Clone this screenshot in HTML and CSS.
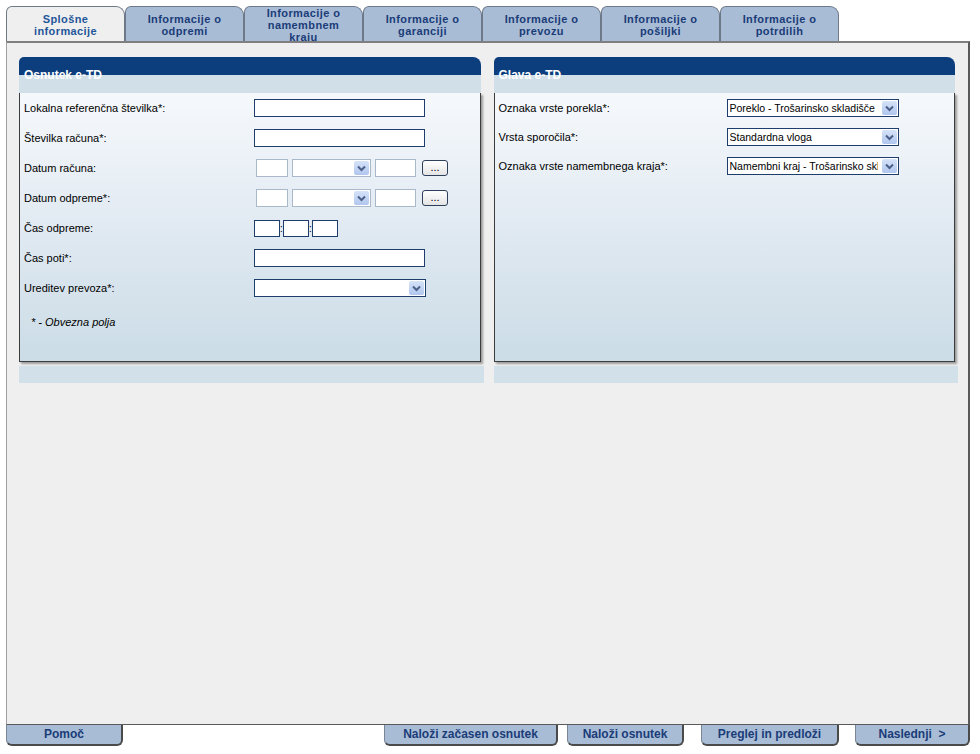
FILE: index.html
```html
<!DOCTYPE html>
<html lang="sl">
  <head>
    <meta charset="UTF-8" />
    <title>e-TD osnutek</title>
    <link rel="stylesheet" href="styles.css">
  </head>
  <body>
    <div class="page">
      <ul class="tabs">
        <li class="tab active">Splošne<br>informacije</li>
        <li class="tab">Informacije o<br>odpremi</li>
        <li class="tab">Informacije o<br>namembnem<br>kraju</li>
        <li class="tab">Informacije o<br>garanciji</li>
        <li class="tab">Informacije o<br>prevozu</li>
        <li class="tab">Informacije o<br>pošiljki</li>
        <li class="tab">Informacije o<br>potrdilih</li>
      </ul>

      <div class="frame">
        <!-- left: osnutek -->
        <div class="column">
          <div class="panel">
            <div class="panel-title">Osnutek e-TD</div>
            <div class="panel-body">
              <div class="row">
                <label>Lokalna referenčna številka*:</label>
                <input class="text" type="text">
              </div>
              <div class="row">
                <label>Številka računa*:</label>
                <input class="text" type="text">
              </div>
              <div class="row">
                <label>Datum računa:</label>
                <div class="fields">
                  <input class="text light day" type="text">
                  <div class="select light month">
                    <select><option></option></select>
                    <span class="arrow"><svg width="15" height="14" viewBox="0 0 15 14"><path d="M4 5.5l3.5 3.5L11 5.5" fill="none" stroke="#4b5f88" stroke-width="2"/></svg></span>
                  </div>
                  <input class="text light year" type="text">
                  <button class="dots" type="button">...</button>
                </div>
              </div>
              <div class="row">
                <label>Datum odpreme*:</label>
                <div class="fields">
                  <input class="text light day" type="text">
                  <div class="select light month">
                    <select><option></option></select>
                    <span class="arrow"><svg width="15" height="14" viewBox="0 0 15 14"><path d="M4 5.5l3.5 3.5L11 5.5" fill="none" stroke="#4b5f88" stroke-width="2"/></svg></span>
                  </div>
                  <input class="text light year" type="text">
                  <button class="dots" type="button">...</button>
                </div>
              </div>
              <div class="row">
                <label>Čas odpreme:</label>
                <div class="time">
                  <input class="text" type="text"><span>:</span><input class="text" type="text"><span>:</span><input class="text" type="text">
                </div>
              </div>
              <div class="row">
                <label>Čas poti*:</label>
                <input class="text" type="text">
              </div>
              <div class="row">
                <label>Ureditev prevoza*:</label>
                <div class="select">
                  <select><option></option></select>
                  <span class="arrow"><svg width="15" height="14" viewBox="0 0 15 14"><path d="M4 5.5l3.5 3.5L11 5.5" fill="none" stroke="#4b5f88" stroke-width="2"/></svg></span>
                </div>
              </div>
              <div class="note">* - Obvezna polja</div>
            </div>
          </div>
          <div class="band"></div>
        </div>

        <!-- right: glava -->
        <div class="column">
          <div class="panel panel-right">
            <div class="panel-title">Glava e-TD</div>
            <div class="panel-body">
              <div class="row">
                <label>Oznaka vrste porekla*:</label>
                <div class="select">
                  <select><option>Poreklo - Trošarinsko skladišče</option></select>
                  <span class="arrow"><svg width="15" height="14" viewBox="0 0 15 14"><path d="M4 5.5l3.5 3.5L11 5.5" fill="none" stroke="#4b5f88" stroke-width="2"/></svg></span>
                </div>
              </div>
              <div class="row">
                <label>Vrsta sporočila*:</label>
                <div class="select">
                  <select><option>Standardna vloga</option></select>
                  <span class="arrow"><svg width="15" height="14" viewBox="0 0 15 14"><path d="M4 5.5l3.5 3.5L11 5.5" fill="none" stroke="#4b5f88" stroke-width="2"/></svg></span>
                </div>
              </div>
              <div class="row">
                <label>Oznaka vrste namembnega kraja*:</label>
                <div class="select">
                  <select><option>Namembni kraj - Trošarinsko skladišče</option></select>
                  <span class="arrow"><svg width="15" height="14" viewBox="0 0 15 14"><path d="M4 5.5l3.5 3.5L11 5.5" fill="none" stroke="#4b5f88" stroke-width="2"/></svg></span>
                </div>
              </div>
            </div>
          </div>
          <div class="band"></div>
        </div>
      </div>

      <div class="footer">
        <button class="fbtn help" type="button">Pomoč</button>
        <button class="fbtn draft" type="button">Naloži začasen osnutek</button>
        <button class="fbtn load" type="button">Naloži osnutek</button>
        <button class="fbtn review" type="button">Preglej in predloži</button>
        <button class="fbtn next" type="button">Naslednji &nbsp;&gt;</button>
      </div>
    </div>
  </body>
</html>
```

FILE: styles.css
```css
body {
  margin: 6px;
  background: #fff;
  font-family: "Liberation Sans", Arial, sans-serif;
  font-size: 11px;
  color: #000;
}
.page {
  width: 964px;
}

/* tabs */
.tabs {
  list-style: none;
  margin: 0;
  padding: 0;
  display: flex;
  height: 35px;
}
.tab {
  width: 119px;
  height: 35px;
  box-sizing: border-box;
  padding-top: 2px;
  display: flex;
  align-items: center;
  justify-content: center;
  text-align: center;
  background: #a9bcd6;
  border: 1px solid #6d7888;
  border-bottom: 0;
  border-radius: 6px 9px 0 0;
  color: #1a3d78;
  font-weight: bold;
  font-size: 11px;
  letter-spacing: 0.4px;
  line-height: 12px;
}
.tab.active {
  background: #efefef;
  color: #1f5699;
}

/* main frame */
.frame {
  position: relative;
  height: 684px;
  box-sizing: border-box;
  background: #efefef;
  border-top: 2px solid #7f7f7f;
  border-left: 1px solid #a0a0a0;
  border-right: 2px solid #5a5a5a;
  border-bottom: 1px solid #5a5a5a;
  padding: 14px 10px 0 12px;
  display: grid;
  grid-template-columns: 1fr 1fr;
  column-gap: 10px;
  align-items: start;
}
.panel {
  margin-right: 3px;
}
.panel-title {
  height: 36px;
  box-sizing: border-box;
  padding: 11px 0 0 5px;
  background: linear-gradient(#0c3e7e 18px, #d0dfe8 18px);
  border-radius: 5px 8px 0 0;
  color: #fff;
  font-weight: bold;
  font-size: 12px;
  line-height: 14px;
}
.panel-body {
  height: 269px;
  box-sizing: border-box;
  padding: 0 4px;
  border: 1px solid #3c3c3c;
  border-top: 0;
  box-shadow: 2px 2px 2px rgba(0, 0, 0, 0.35);
  background: linear-gradient(#f6f9fc, #e3ebf3 45%, #cbdce6);
}
.band {
  height: 17px;
  margin-top: 4px;
  background: #d1e0e9;
}

/* form rows */
.row {
  display: grid;
  grid-template-columns: 230px auto;
  align-items: center;
  height: 30px;
}
.panel-right .row {
  grid-template-columns: 228px auto;
  height: 29px;
}
.note {
  margin-top: 12px;
  padding-left: 7px;
  font-style: italic;
  line-height: 14px;
}
.text {
  width: 171px;
  height: 18px;
  box-sizing: border-box;
  margin: 0;
  padding: 0 2px;
  border: 1px solid #1e3c6c;
  background: #fff;
  font: 11px "Liberation Sans", Arial, sans-serif;
}
.text.light {
  border-color: #a9b9c9;
}
.fields {
  display: flex;
  align-items: center;
  gap: 4px;
}
.day {
  width: 32px;
  margin-left: 2px;
}
.year {
  width: 41px;
}
.dots {
  width: 26px;
  height: 16px;
  margin-left: 2px;
  padding: 0 0 3px;
  border: 1px solid #2e3f5c;
  border-radius: 3px;
  background: linear-gradient(#ffffff, #e4e4e4);
  font: 11px "Liberation Sans", Arial, sans-serif;
  line-height: 10px;
}
.time {
  display: flex;
  align-items: center;
}
.time .text {
  width: 26px;
  height: 17px;
}
.time span {
  width: 3px;
  text-align: center;
  font-size: 10px;
}
.select {
  display: inline-flex;
  align-items: center;
  width: 172px;
  height: 18px;
  box-sizing: border-box;
  border: 1px solid #1e3c6c;
  background: #fff;
}
.select.light {
  border-color: #a9b9c9;
}
.month {
  width: 79px;
}
.select select {
  flex: 1;
  min-width: 0;
  height: 16px;
  -webkit-appearance: none;
  appearance: none;
  border: 0;
  outline: 0;
  background: transparent;
  padding: 0 2px;
  color: #000;
  font: 10.5px "Liberation Sans", Arial, sans-serif;
}
.arrow {
  display: flex;
  width: 15px;
  height: 14px;
  margin: 0 1px 0 2px;
  border-radius: 2px;
  background: linear-gradient(#d6e3f8, #b0c6ee);
}

/* bottom buttons */
.footer {
  display: flex;
}
.fbtn {
  height: 21px;
  box-sizing: border-box;
  padding: 0 0 1px;
  background: #a9bcd6;
  border: 1px solid #7a8696;
  border-top: 0;
  border-right: 2px solid #4a4a4a;
  border-bottom: 2px solid #4a4a4a;
  border-radius: 0 0 6px 6px;
  color: #1a3d78;
  font: bold 12px "Liberation Sans", Arial, sans-serif;
}
.help {
  width: 117px;
}
.draft {
  width: 174px;
  margin-left: auto;
}
.load {
  width: 117px;
  margin-left: 9px;
}
.review {
  width: 138px;
  margin-left: 17px;
}
.next {
  width: 115px;
  margin-left: 16px;
}
```
